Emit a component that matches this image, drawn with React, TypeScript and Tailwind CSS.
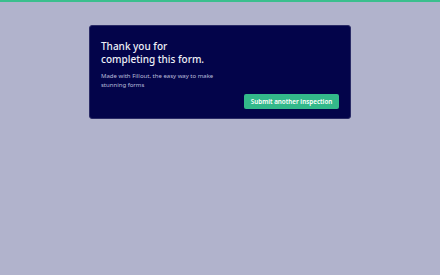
export default function App() {
  return (
    <div
      className="w-[440px] h-[275px] bg-[#b1b3cc] flex flex-col"
      style={{ fontFamily: '"Noto Sans", "Open Sans", sans-serif' }}
    >
      <div className="h-[2px] bg-[#3bbf8e]" />
      <div className="flex justify-center pt-[23px]">
        <div className="w-[262px] h-[94px] bg-[#03044a] rounded-[3px] border border-[#2a2b66] pl-[11px] pr-[11px] pt-[14px] flex flex-col">
          <div className="text-[#eef0f7] text-[10px] leading-[13px] font-medium">
            Thank you for
            <br />
            completing this form.
          </div>
          <div className="mt-[6px] text-[#bcbedb] text-[6px] leading-[8.5px] w-[130px]">
            Made with Fillout, the easy way to make
            <br />
            stunning forms
          </div>
          <div className="flex justify-end mt-auto mb-[9px]">
            <div className="h-[15px] w-[95px] rounded-[2px] bg-[#33b98a] text-white text-[6.3px] font-semibold whitespace-nowrap flex items-center justify-center">
              Submit another inspection
            </div>
          </div>
        </div>
      </div>
    </div>
  );
}
